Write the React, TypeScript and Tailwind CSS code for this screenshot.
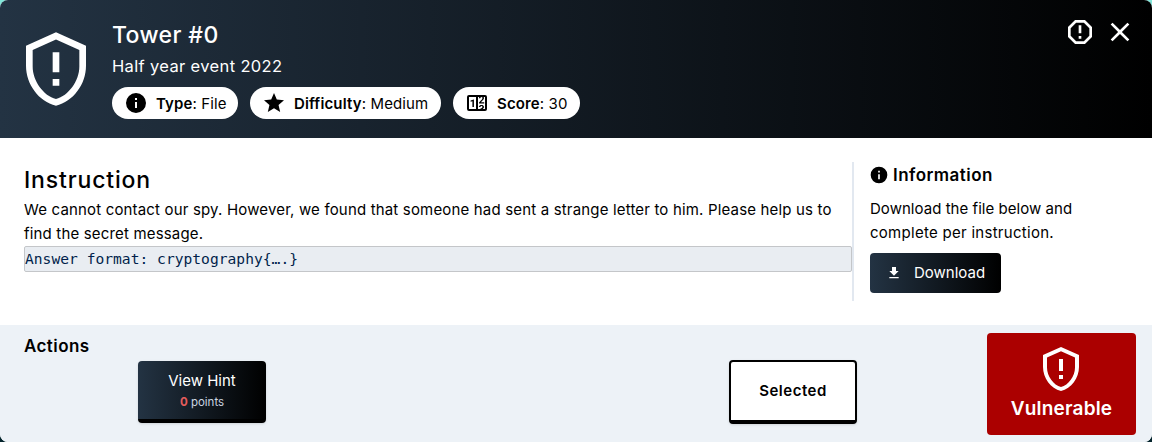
import React from 'react';

const shieldAlert =
  'M21,11C21,16.55 17.16,21.74 12,23C6.84,21.74 3,16.55 3,11V5L12,1L21,5V11M12,21C15.75,20 19,15.54 19,11.22V6.3L12,3.18L5,6.3V11.22C5,15.54 8.25,20 12,21M11,7H13V13H11V7M11,15H13V17H11V15Z';
const alertOctagon =
  'M8.27,3L3,8.27V15.73L8.27,21H15.73L21,15.73V8.27L15.73,3M9.1,5H14.9L19,9.1V14.9L14.9,19H9.1L5,14.9V9.1M11,15H13V17H11V15M11,7H13V13H11V7';
const close =
  'M19,6.41L17.59,5L12,10.59L6.41,5L5,6.41L10.59,12L5,17.59L6.41,19L12,13.41L17.59,19L19,17.59L13.41,12L19,6.41Z';
const information =
  'M13,9H11V7H13M13,17H11V11H13M12,2A10,10 0 0,0 2,12A10,10 0 0,0 12,22A10,10 0 0,0 22,12A10,10 0 0,0 12,2Z';
const star =
  'M12,17.27L18.18,21L16.54,13.97L22,9.24L14.81,8.62L12,2L9.19,8.62L2,9.24L7.45,13.97L5.82,21L12,17.27Z';
const counter =
  'M4,4H20A2,2 0 0,1 22,6V18A2,2 0 0,1 20,20H4A2,2 0 0,1 2,18V6A2,2 0 0,1 4,4M4,6V18H11V6H4M20,18V6H18.76C19,6.54 18.95,7.07 18.95,7.13C18.88,7.8 18.41,8.5 18.24,8.75L15.91,11.3L19.23,11.28L19.24,12.5L14.04,12.47L14,11.47C14,11.47 17.05,8.24 17.2,7.95C17.34,7.67 17.91,6 16.5,6C15.27,6.05 15.41,7.3 15.41,7.3L13.87,7.31C13.87,7.31 13.88,6.65 14.25,6H13V18H15.58L15.57,17.14L16.54,17.13C16.54,17.13 17.45,16.97 17.46,16.08C17.5,15.08 16.65,15.08 16.5,15.08C16.37,15.08 15.43,15.13 15.43,15.95H13.91C13.91,15.95 13.95,13.89 16.5,13.89C19.1,13.89 18.96,15.91 18.96,15.91C18.96,15.91 19,17.16 17.85,17.63L18.37,18H20M8.92,16H7.42V10.2L5.62,10.76V9.53L8.76,8.41H8.92V16Z';
const download = 'M5,20H19V18H5M19,9H15V3H9V9H5L12,16L19,9Z';

function Icon({ path, className }: { path: string; className: string }) {
  return (
    <svg viewBox="0 0 24 24" fill="currentColor" aria-hidden="true" className={`shrink-0 ${className}`}>
      <path d={path} />
    </svg>
  );
}

function Pill({ icon, label, value, className }: { icon: string; label: string; value: string; className: string }) {
  return (
    <div className={`flex h-8 items-center rounded-full bg-white pl-3 text-black ${className}`}>
      <Icon path={icon} className="mr-2 size-6" />
      <span className="pt-px tracking-[0.13px]">
        <b className="font-semibold">{label}</b>: {value}
      </span>
    </div>
  );
}

export default function App() {
  return (
    <div className="h-[442px] w-[1152px] bg-[linear-gradient(to_bottom,#81e6d9_0,#81e6d9_20px,#04242c_20px)] font-['Inter',sans-serif] text-[15px] leading-6 whitespace-nowrap text-black">
      <div className="flex h-full flex-col overflow-hidden rounded-lg bg-white">
        <header className="flex h-[138px] shrink-0 items-start bg-linear-to-r/srgb from-[#233343] to-black px-4 text-white">
          <Icon path={shieldAlert} className="mt-[29px] size-20" />
          <div className="ml-4 flex flex-col">
            <h1 className="mt-[17px] text-[23px] leading-9 font-medium tracking-[0.4px]">Tower #0</h1>
            <p className="mt-px text-[16.5px] tracking-[0.35px]">Half year event 2022</p>
            <div className="mt-[9px] flex gap-3">
              <Pill icon={information} label="Type" value="File" className="w-[126px]" />
              <Pill icon={star} label="Difficulty" value="Medium" className="w-[191px]" />
              <Pill icon={counter} label="Score" value="30" className="w-[127px]" />
            </div>
          </div>
          <div className="mt-4 ml-auto flex gap-2">
            <Icon path={alertOctagon} className="size-8" />
            <Icon path={close} className="size-8" />
          </div>
        </header>

        <main className="flex h-[187px] shrink-0 px-6 py-6">
          <section className="w-[828px] pt-0.5">
            <h2 className="text-[23px] leading-8 font-medium tracking-[0.85px]">Instruction</h2>
            <p className="mt-0.5 tracking-[0.17px]">
              We cannot contact our spy. However, we found that someone had sent a strange letter to him. Please help us to
              <br />
              find the secret message.
            </p>
            <pre className="h-[26px] rounded-xs border border-[#c4c6c9] bg-[#e9edf2] font-['DejaVu_Sans_Mono',monospace] text-[14.6px] leading-6 tracking-[0.02px] text-[#011f4b]">
              Answer format: cryptography{'{….}'}
            </pre>
          </section>
          <aside className="h-[139px] border-l-2 border-[#e2e8f0] pl-4">
            <h3 className="flex h-[26px] items-center gap-1 text-[17px] font-semibold tracking-[0.45px]">
              <Icon path={information} className="-ml-px size-5" />
              Information
            </h3>
            <p className="mt-[9px]">
              <span className="tracking-[0.04px]">Download the file below and</span>
              <br />
              <span className="tracking-[0.28px]">complete per instruction.</span>
            </p>
            <button className="mt-2 flex h-10 w-[131px] items-center rounded bg-linear-to-r/srgb from-[#233343] to-black pl-4 text-white">
              <Icon path={download} className="mr-3 size-4" />
              Download
            </button>
          </aside>
        </main>

        <footer className="flex grow items-start bg-[#edf2f7] pt-2 pr-4 pl-6">
          <h3 className="w-[114px] text-[17px] leading-[26px] font-semibold tracking-[0.42px]">Actions</h3>
          <button className="mt-7 flex h-[62px] w-32 flex-col items-center rounded border-b-4 border-black bg-linear-to-r/srgb from-[#233343] to-black pt-2 text-white shadow-sm">
            <span>View Hint</span>
            <span className="text-[11.5px] leading-[18px] text-[#cbd5e0]">
              <b className="font-bold text-[#e45c5c]">0</b> points
            </span>
          </button>
          <button className="mt-[27px] ml-[463px] flex h-16 w-32 items-center justify-center rounded border-2 border-b-4 border-black bg-white font-semibold tracking-[0.5px] shadow-sm">
            Selected
          </button>
          <div className="ml-auto flex h-[102px] w-[149px] flex-col items-center rounded bg-[#ab0000] pt-3 text-white">
            <Icon path={shieldAlert} className="mr-px size-12" />
            <span className="mt-px text-[19px] leading-[30px] font-semibold tracking-[0.2px]">Vulnerable</span>
          </div>
        </footer>
      </div>
    </div>
  );
}
